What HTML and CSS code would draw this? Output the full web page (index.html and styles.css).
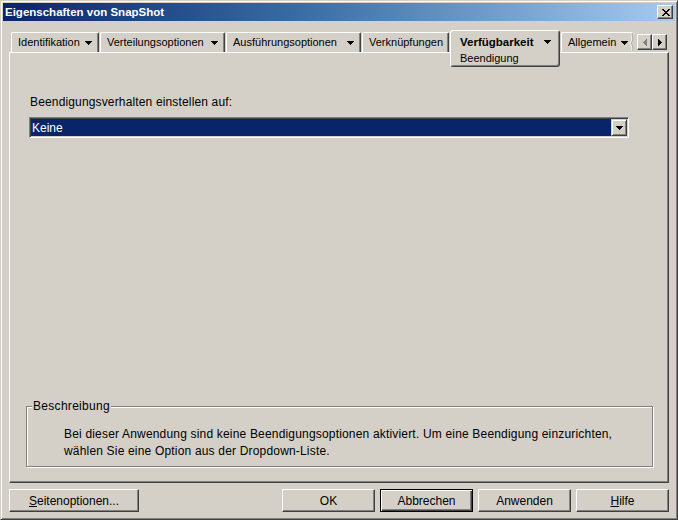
FILE: index.html
```html
<!DOCTYPE html>
<html lang="de">
<head>
<meta charset="utf-8">
<title>Eigenschaften von SnapShot</title>
<link rel="stylesheet" href="styles.css">
</head>
<body>
<div class="window">
  <div class="titlebar">
    <span class="title">Eigenschaften von SnapShot</span>
    <span class="close-btn">
      <svg width="8" height="7" viewBox="0 0 8 7" shape-rendering="crispEdges"><path d="M0 0h2v1H0zM6 0h2v1H6zM1 1h2v1H1zM5 1h2v1H5zM2 2h4v1H2zM3 3h2v1H3zM2 4h4v1H2zM1 5h2v1H1zM5 5h2v1H5zM0 6h2v1H0zM6 6h2v1H6z" fill="#000"/></svg>
    </span>
  </div>

  <div class="tabstrip">
    <div class="tab tab-ident">Identifikation<svg class="caret" width="7" height="4" viewBox="0 0 7 4" shape-rendering="crispEdges"><path d="M0 0H7V1H6V2H5V3H4V4H3V3H2V2H1V1H0Z"/></svg></div>
    <div class="tab tab-verteil">Verteilungsoptionen<svg class="caret" width="7" height="4" viewBox="0 0 7 4" shape-rendering="crispEdges"><path d="M0 0H7V1H6V2H5V3H4V4H3V3H2V2H1V1H0Z"/></svg></div>
    <div class="tab tab-ausf">Ausführungsoptionen<svg class="caret" width="7" height="4" viewBox="0 0 7 4" shape-rendering="crispEdges"><path d="M0 0H7V1H6V2H5V3H4V4H3V3H2V2H1V1H0Z"/></svg></div>
    <div class="tab tab-verkn">Verknüpfungen</div>
    <div class="tab-active">
      <div class="tab-active-line">Verfügbarkeit<svg class="caret" width="7" height="4" viewBox="0 0 7 4" shape-rendering="crispEdges"><path d="M0 0H7V1H6V2H5V3H4V4H3V3H2V2H1V1H0Z"/></svg></div>
      <div class="subtab">Beendigung</div>
    </div>
    <div class="tab tab-cut">Allgemein<svg class="caret" width="7" height="4" viewBox="0 0 7 4" shape-rendering="crispEdges"><path d="M0 0H7V1H6V2H5V3H4V4H3V3H2V2H1V1H0Z"/></svg><svg class="cut-edge" width="5" height="19" viewBox="0 0 5 19"><path d="M3 0.5C0.5 3 4.5 6 2 9.5C0 12 4.5 15 2.5 18.5" fill="none" stroke="#ffffff" stroke-width="1"/><path d="M4 0.5C1.5 3 5.5 6 3 9.5C1 12 5.5 15 3.5 18.5" fill="none" stroke="#a09c94" stroke-width="0.8"/></svg></div>
    <div class="scroller">
      <span class="sbtn"><svg width="4" height="7" viewBox="0 0 4 7" shape-rendering="crispEdges"><path d="M4 0V7H3V6H2V5H1V4H0V3H1V2H2V1H3V0Z" fill="#808080"/></svg></span>
      <span class="sbtn"><svg width="4" height="7" viewBox="0 0 4 7" shape-rendering="crispEdges"><path d="M0 0H1V1H2V2H3V3H4V4H3V5H2V6H1V7H0Z" fill="#000"/></svg></span>
    </div>
  </div>

  <div class="panel">
    <div class="field-label">Beendigungsverhalten einstellen auf:</div>
    <div class="combo">
      <span class="combo-value">Keine</span>
      <span class="combo-btn"><svg width="7" height="4" viewBox="0 0 7 4" shape-rendering="crispEdges"><path d="M0 0H7V1H6V2H5V3H4V4H3V3H2V2H1V1H0Z"/></svg></span>
    </div>
    <div class="panel-spacer"></div>
    <fieldset class="group">
      <legend>Beschreibung</legend>
      <p class="group-text">Bei dieser Anwendung sind keine Beendigungsoptionen aktiviert. Um eine Beendigung einzurichten, wählen Sie eine Option aus der Dropdown-Liste.</p>
    </fieldset>
  </div>

  <div class="buttons">
    <button class="btn btn-wide"><u>S</u>eitenoptionen...</button>
    <button class="btn btn-first">OK</button>
    <button class="btn btn-default">Abbrechen</button>
    <button class="btn">Anwenden</button>
    <button class="btn"><u>H</u>ilfe</button>
  </div>
</div>
</body>
</html>
```

FILE: styles.css
```css
* {
  box-sizing: border-box;
}

html, body {
  margin: 0;
  padding: 0;
  background: #d4d0c8;
}

body {
  font-family: "Liberation Sans", Arial, sans-serif;
  font-size: 12px;
  color: #000;
}

.window {
  width: 678px;
  height: 520px;
  display: flex;
  flex-direction: column;
  background: #d4d0c8;
  border: 1px solid;
  border-color: #d4d0c8 #404040 #404040 #d4d0c8;
  box-shadow: inset 1px 1px #ffffff, inset -1px -1px #808080;
  padding: 1px 8px 0 8px;
}

/* Title bar */
.titlebar {
  height: 18px;
  margin: 1px -6px 0 -6px;
  display: flex;
  align-items: center;
  padding-left: 2px;
  background: linear-gradient(to right, #0a246a 0%, #3a6ea5 45%, #a6caf0 100%);
}

.title {
  color: #fff;
  font-weight: bold;
  font-size: 11.5px;
  line-height: 14px;
  flex: 1;
}

.close-btn {
  width: 16px;
  height: 14px;
  margin-right: 2px;
  display: flex;
  align-items: center;
  justify-content: center;
  background: #d4d0c8;
  border: 1px solid;
  border-color: #ffffff #404040 #404040 #ffffff;
  box-shadow: inset -1px -1px #808080;
  padding-left: 1px;
}

/* Tabs */
.tabstrip {
  margin-top: 9px;
  height: 22px;
  display: flex;
  align-items: flex-end;
  gap: 1px;
  padding-left: 2px;
}

.tab {
  height: 20px;
  display: flex;
  align-items: center;
  flex-shrink: 0;
  padding: 0 6px 0 6px;
  font-size: 11px;
  line-height: 13px;
  white-space: nowrap;
  border-top: 1px solid #ffffff;
  border-left: 1px solid #ffffff;
  border-right: 1px solid #404040;
  box-shadow: inset -1px 0 #808080;
  border-radius: 2px 2px 0 0;
}

.tab-ident { width: 88px; }
.tab-verteil { width: 125px; }
.tab-ausf { width: 135px; }
.tab-verkn { width: 87px; }

.caret {
  margin-left: auto;
  flex-shrink: 0;
  fill: #000;
}

.tab-cut {
  border-right: none;
  box-shadow: none;
  padding-right: 0;
}

.tab-cut .caret {
  margin-left: 5px;
}

.cut-edge {
  margin-left: 1px;
  align-self: flex-start;
  margin-top: -1px;
}

.tab-active {
  position: relative;
  z-index: 2;
  align-self: flex-start;
  width: 110px;
  height: 37px;
  margin-bottom: -15px;
  flex-shrink: 0;
  padding: 4px 8px 0 9px;
  background: #d4d0c8;
  border: 1px solid;
  border-color: #ffffff #404040 #404040 #ffffff;
  box-shadow: inset -1px -1px #808080;
  border-radius: 3px;
  white-space: nowrap;
}

.tab-active-line {
  display: flex;
  align-items: center;
  height: 14px;
  font-weight: bold;
  font-size: 11.5px;
}

.subtab {
  margin-top: 2px;
  height: 14px;
  line-height: 14px;
  font-size: 11px;
}

.scroller {
  margin-left: auto;
  margin-right: 2px;
  align-self: flex-start;
  margin-top: 4px;
  display: flex;
}

.sbtn {
  width: 15px;
  height: 16px;
  display: flex;
  align-items: center;
  justify-content: center;
  background: #d4d0c8;
  border: 1px solid;
  border-color: #ffffff #404040 #404040 #ffffff;
  box-shadow: inset -1px -1px #808080;
}

/* Panel */
.panel {
  flex: 1;
  display: flex;
  flex-direction: column;
  border: 1px solid;
  border-color: #ffffff #404040 #404040 #ffffff;
  box-shadow: inset -1px -1px #808080;
}

.field-label {
  margin: 42px 0 0 20px;
  line-height: 14px;
  letter-spacing: 0.15px;
}

.combo {
  margin: 8px 0 0 19px;
  width: 600px;
  height: 21px;
  display: flex;
  align-items: center;
  background: #0a246a;
  border: 1px solid;
  border-color: #808080 #ffffff #ffffff #808080;
  box-shadow: inset 1px 1px #404040, inset -1px -1px #d4d0c8;
  padding: 1px 1px 1px 2px;
}

.combo-value {
  flex: 1;
  color: #fff;
  line-height: 14px;
}

.combo-btn {
  width: 16px;
  height: 17px;
  display: flex;
  align-items: center;
  justify-content: center;
  background: #d4d0c8;
  border: 1px solid;
  border-color: #d4d0c8 #404040 #404040 #d4d0c8;
  box-shadow: inset 1px 1px #ffffff, inset -1px -1px #808080;
  padding-top: 1px;
}

.panel-spacer {
  flex: 1;
}

.group {
  margin: 0 15px 15px 16px;
  padding: 13px 20px 6px 5px;
  min-width: 0;
  border: 1px solid #808080;
  box-shadow: inset 1px 1px #ffffff, 1px 1px #ffffff;
}

.group legend {
  padding: 0 1px;
  line-height: 14px;
  letter-spacing: 0.3px;
  background: #d4d0c8;
}

.group-text {
  margin: 0 0 0 32px;
  line-height: 17px;
  letter-spacing: 0.18px;
}

/* Buttons */
.buttons {
  display: flex;
  gap: 5px;
  margin: 6px 0 7px 0;
  height: 23px;
}

.btn {
  width: 93px;
  height: 23px;
  padding: 0;
  font-family: "Liberation Sans", Arial, sans-serif;
  font-size: 12px;
  color: #000;
  background: #d4d0c8;
  border: 1px solid;
  border-color: #ffffff #404040 #404040 #ffffff;
  box-shadow: inset -1px -1px #808080;
  border-radius: 0;
}

.btn-wide {
  width: 130px;
}

.btn-first {
  margin-left: auto;
}

.btn-default {
  border-color: #000;
  box-shadow: inset 1px 1px #ffffff, inset -1px -1px #404040, inset -2px -2px #808080;
}
```
